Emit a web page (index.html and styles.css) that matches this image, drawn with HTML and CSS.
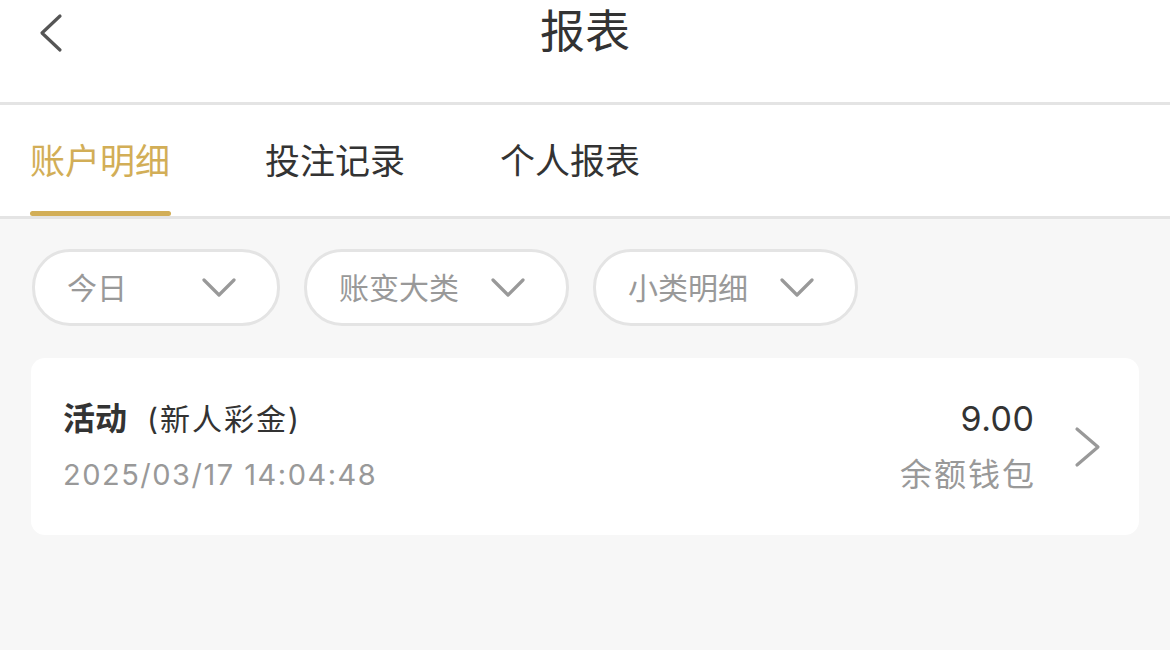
FILE: index.html
```html
<!DOCTYPE html>
<html lang="zh-CN">
<head>
    <meta charset="UTF-8">
    <meta name="viewport" content="width=device-width, initial-scale=1.0">
    <title>报表</title>
    <link rel="stylesheet" href="styles.css">
</head>
<body>

<div class="header">
    <a class="back" href="#">
        <svg width="28" height="40" viewBox="0 0 28 40">
            <path d="M24 3 L6 20 L24 37" fill="none" stroke="#555" stroke-width="3.2" stroke-linecap="round" stroke-linejoin="round"/>
        </svg>
    </a>
    <h1>报表</h1>
</div>

<div class="tabs">
    <div class="tab active">账户明细</div>
    <div class="tab">投注记录</div>
    <div class="tab">个人报表</div>
</div>

<div class="content">
    <div class="filters">
        <div class="pill pill-short">
            <span>今日</span>
            <svg class="arrow" width="34" height="22" viewBox="0 0 34 22"><path d="M2 3 L17 18 L32 3" fill="none" stroke="#999" stroke-width="3.2" stroke-linecap="round" stroke-linejoin="round"/></svg>
        </div>
        <div class="pill">
            <span>账变大类</span>
            <svg class="arrow" width="34" height="22" viewBox="0 0 34 22"><path d="M2 3 L17 18 L32 3" fill="none" stroke="#999" stroke-width="3.2" stroke-linecap="round" stroke-linejoin="round"/></svg>
        </div>
        <div class="pill">
            <span>小类明细</span>
            <svg class="arrow" width="34" height="22" viewBox="0 0 34 22"><path d="M2 3 L17 18 L32 3" fill="none" stroke="#999" stroke-width="3.2" stroke-linecap="round" stroke-linejoin="round"/></svg>
        </div>
    </div>

    <div class="record">
        <div class="record-left">
            <div class="record-title">活动<span class="record-sub">(新人彩金)</span></div>
            <div class="record-time">2025/03/17 14:04:48</div>
        </div>
        <div class="record-right">
            <div class="record-amount">9.00</div>
            <div class="record-wallet">余额钱包</div>
        </div>
        <svg class="record-go" width="28" height="42" viewBox="0 0 28 42"><path d="M3 3 L24 21 L3 39" fill="none" stroke="#999" stroke-width="3.2" stroke-linecap="round" stroke-linejoin="round"/></svg>
    </div>
</div>

</body>
</html>
```

FILE: styles.css
```css
body {
    margin: 0;
    font-family: Inter, "Noto Sans CJK SC", sans-serif;
    background: #f7f7f7;
    color: #333;
}
.header {
    position: relative;
    height: 102px;
    background: #fff;
    border-bottom: 3px solid #e4e4e4;
    display: flex;
    align-items: flex-start;
    justify-content: center;
}
.back {
    position: absolute;
    left: 36px;
    top: 13px;
}
.header h1 {
    margin: 0;
    padding-top: 2px;
    font-size: 45px;
    font-weight: normal;
    line-height: 60px;
    color: #333;
}
.tabs {
    display: flex;
    gap: 95px;
    padding: 0 30px;
    height: 111px;
    background: #fff;
    border-bottom: 3px solid #e4e4e4;
}
.tab {
    font-size: 35px;
    line-height: 112px;
    color: #333;
    position: relative;
}
.tab.active {
    color: #d2ae57;
}
.tab.active::after {
    content: "";
    position: absolute;
    left: 0;
    right: -1px;
    bottom: 0;
    height: 5px;
    border-radius: 3px;
    background: #d2ae57;
}
.content {
    padding: 30px 31px;
}
.filters {
    display: flex;
    gap: 24px;
}
.pill {
    box-sizing: border-box;
    width: 265px;
    height: 77px;
    border: 3px solid #e4e4e4;
    border-radius: 38px;
    background: #fff;
    display: flex;
    align-items: center;
    justify-content: space-between;
    padding: 0 41px 4px 32px;
    font-size: 30px;
    color: #999;
}
.pill .arrow {
    margin-top: 4px;
}
.pill-short {
    width: 248px;
    margin-left: 1px;
}
.arrow {
    display: block;
}
.record {
    margin-top: 32px;
    height: 177px;
    box-sizing: border-box;
    background: #fff;
    border-radius: 14px;
    display: flex;
    align-items: center;
    padding: 0 37px 0 32px;
}
.record-left {
    flex: 1;
}
.record-title {
    font-size: 32px;
    font-weight: bold;
    color: #333;
    line-height: 44px;
}
.record-sub {
    margin-left: 20px;
    font-size: 30px;
    font-weight: normal;
    letter-spacing: 2px;
}
.record-time {
    margin-top: 12px;
    font-size: 29px;
    color: #999;
    line-height: 44px;
    letter-spacing: 1.5px;
}
.record-right {
    text-align: right;
    margin-right: 40px;
}
.record-amount {
    font-size: 34px;
    color: #333;
    line-height: 44px;
    letter-spacing: 0.5px;
    margin-right: -0.5px;
}
.record-wallet {
    margin-top: 12px;
    font-size: 32px;
    color: #999;
    line-height: 44px;
    letter-spacing: 2px;
    margin-right: -2px;
}
.record-go {
    display: block;
    margin-top: 0;
}
```
